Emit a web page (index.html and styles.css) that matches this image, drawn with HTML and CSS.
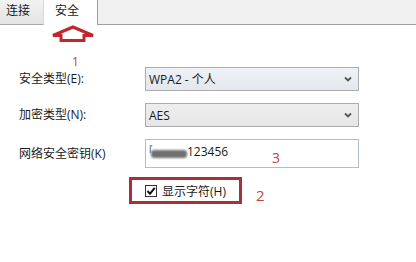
FILE: index.html
```html
<!DOCTYPE html>
<html lang="zh">
<head>
<meta charset="utf-8">
<link rel="stylesheet" href="styles.css">
</head>
<body>
<div class="page">
  <div class="tabs">
    <div class="tab">连接</div>
    <div class="tab active">安全</div>
    <div class="tab-rest"></div>
  </div>

  <div class="form">
    <div class="label">安全类型(E):</div>
    <div class="select hover"><span>WPA2 - 个人</span>
      <svg class="chev" width="8" height="6" viewBox="0 0 8 6"><path d="M1 1.5 L4 4.5 L7 1.5" fill="none" stroke="#555" stroke-width="1.8"/></svg>
    </div>

    <div class="label">加密类型(N):</div>
    <div class="select"><span>AES</span>
      <svg class="chev" width="8" height="6" viewBox="0 0 8 6"><path d="M1 1.5 L4 4.5 L7 1.5" fill="none" stroke="#555" stroke-width="1.8"/></svg>
    </div>

    <div class="label">网络安全密钥(K)</div>
    <div class="input"><span class="tick">ľ</span><span class="smudge"></span><span>123456</span></div>
  </div>

  <div class="check-row">
    <span class="checkbox">
      <svg width="10" height="10" viewBox="0 0 10 10"><path d="M1.5 5 L4 7.8 L8.7 1.8" fill="none" stroke="#111" stroke-width="2"/></svg>
    </span>
    <span class="check-label">显示字符(H)</span>
  </div>

  <svg class="arrow" width="46" height="18" viewBox="0 0 46 18">
    <path d="M23 2 L3 10.5 L11 10.5 L11 15.5 L34 15.5 L34 10.5 L43 10.5 Z" fill="#fff" stroke="#c1262c" stroke-width="3" stroke-linejoin="miter"/>
  </svg>
  <span class="note n1">1</span>
  <span class="note n2">2</span>
  <span class="note n3">3</span>
</div>
</body>
</html>
```

FILE: styles.css
```css
html, body {
  margin: 0;
  padding: 0;
  background: #fff;
}
.page {
  position: relative;
  width: 416px;
  height: 262px;
  overflow: hidden;
  font-family: "Open Sans", "Noto Sans CJK SC", sans-serif;
  font-size: 12px;
  color: #1a1a1a;
}
.tabs {
  display: flex;
  height: 25px;
}
.tab {
  box-sizing: border-box;
  width: 44px;
  height: 25px;
  padding-left: 6px;
  line-height: 22px;
  background: linear-gradient(#f2f2f2, #e4e4e4);
  border-right: 1px solid #d9d9d9;
  border-bottom: 1px solid #a9a9a9;
}
.tab.active {
  width: 54px;
  padding-left: 11px;
  background: #fff;
  border-right: 1px solid #a0a0a0;
  border-bottom: none;
}
.tab-rest {
  flex: 1;
  background: #f0f0f0;
  border-bottom: 1px solid #a0a0a0;
}
.form {
  display: grid;
  grid-template-columns: 126px 214px;
  grid-template-rows: 24px 24px 29px;
  row-gap: 12px;
  align-items: center;
  padding: 42px 0 0 19px;
}
.label {
  line-height: 14px;
}
.select {
  box-sizing: border-box;
  height: 100%;
  display: flex;
  align-items: center;
  justify-content: space-between;
  padding: 0 6px 0 3px;
  border: 1px solid #acacac;
  background: linear-gradient(#eeeeee, #e6e6e6);
}
.select.hover {
  background: linear-gradient(#eef1f5, #e4e8ee);
}
.chev {
  display: block;
}
.input {
  box-sizing: border-box;
  height: 100%;
  display: flex;
  align-items: center;
  padding: 0 0 4px 3px;
  border: 1px solid #b3bcc6;
  background: #fff;
}
.tick {
  font-size: 10px;
  color: #555;
  margin-top: -6px;
  width: 2px;
}
.smudge {
  display: inline-block;
  width: 36px;
  height: 8px;
  margin: 4px 0 0 0;
  background: #707070;
  border-radius: 3px;
  filter: blur(1px);
}
.check-row {
  box-sizing: border-box;
  width: 113px;
  height: 27px;
  margin: 9px 0 0 129px;
  display: flex;
  align-items: center;
  gap: 5px;
  padding-left: 13px;
  border: 3px solid #a8303a;
}
.checkbox {
  box-sizing: border-box;
  width: 12px;
  height: 12px;
  border: 1px solid #333;
  display: flex;
  align-items: center;
  justify-content: center;
  background: #fff;
}
.checkbox svg {
  display: block;
}
.arrow {
  position: absolute;
  left: 50px;
  top: 25px;
}
.note {
  position: absolute;
  font-family: "Open Sans", sans-serif;
  color: #c0443f;
  line-height: 1;
}
.n1 {
  left: 72px;
  top: 56px;
  font-size: 12px;
}
.n2 {
  left: 256px;
  top: 188px;
  font-size: 15px;
}
.n3 {
  left: 272px;
  top: 151px;
  font-size: 14px;
}
```
